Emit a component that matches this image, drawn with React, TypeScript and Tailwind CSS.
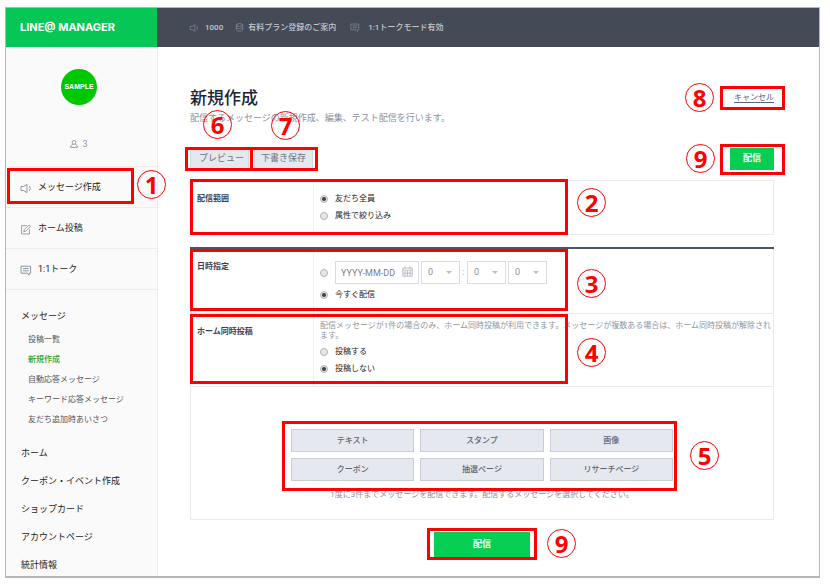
import React, { useState } from 'react';

const FONT = "font-['Roboto','Noto_Sans_CJK_JP',sans-serif]";

type IconProps = { className?: string };

const SpeakerIcon: React.FC<IconProps> = ({ className }) => (
    <svg viewBox="0 0 12 10" fill="none" stroke="currentColor" strokeWidth="1" className={className}>
        <path d="M1 3h2.6L7 .9v8.2L3.6 7H1z" strokeLinejoin="round" />
        <path d="M9.4 2.6q1.8 2.4 0 4.8" />
    </svg>
);

const CoinsIcon: React.FC<IconProps> = ({ className }) => (
    <svg viewBox="0 0 10 10" fill="none" stroke="currentColor" strokeWidth="1" className={className}>
        <ellipse cx="5" cy="2.2" rx="3.6" ry="1.5" />
        <path d="M1.4 2.4v4.8M8.6 2.4v4.8M1.4 4.6c0 1 1.6 1.6 3.6 1.6s3.6-.6 3.6-1.6M1.4 7.2c0 1 1.6 1.9 3.6 1.9s3.6-.9 3.6-1.9" />
    </svg>
);

const TalkIcon: React.FC<IconProps> = ({ className }) => (
    <svg viewBox="0 0 12 11" fill="none" stroke="currentColor" strokeWidth="1" className={className}>
        <path d="M1 1.2h9.6v7H9.2v1.9L7 8.2H1z" strokeLinejoin="round" />
        <path d="M3 3.6h5.6M3 5.8h5.6" />
    </svg>
);

const EditIcon: React.FC<IconProps> = ({ className }) => (
    <svg viewBox="0 0 12 12" fill="none" stroke="currentColor" strokeWidth="1" className={className}>
        <path d="M6.8 1.8H1.2v9h8.6V6" strokeLinejoin="round" />
        <path d="M3.6 8.4l.6-2.3L9.3 1l1.7 1.6-5.2 5.2z" strokeLinejoin="round" />
    </svg>
);

const PersonIcon: React.FC<IconProps> = ({ className }) => (
    <svg viewBox="0 0 8 8" fill="none" stroke="currentColor" strokeWidth=".9" className={className}>
        <circle cx="4" cy="2.4" r="1.9" />
        <path d="M2.8 4.3L.6 6v1.4h6.8V6L5.2 4.3" strokeLinejoin="round" />
    </svg>
);

const CalendarIcon: React.FC<IconProps> = ({ className }) => (
    <svg viewBox="0 0 11 11" fill="none" stroke="currentColor" strokeWidth="1" className={className}>
        <path d="M.8 2h9.4v8.2H.8zM.8 4.2h9.4M3 .4v2.2M8 .4v2.2" />
        <path d="M3 5v5M5.5 5v5M8 5v5M1 7.2h9" />
    </svg>
);

// Red frame drawn over the control it explains
const Frame: React.FC<{ className: string }> = ({ className }) => (
    <div className={`absolute border-3 border-[#ff0000] pointer-events-none ${className}`} />
);

const Badge: React.FC<{ n: number; className: string }> = ({ n, className }) => (
    <span
        className={`absolute flex items-center justify-center size-[29px] rounded-full border border-[#ff0000] text-[#ff0000] text-2xl leading-none font-bold font-[family-name:Open_Sans] pointer-events-none ${className}`}
    >
        {n}
    </span>
);

const Radio: React.FC<{ name: string; label: string; checked: boolean; onChange: () => void }> = ({ name, label, checked, onChange }) => (
    <label className="flex items-center gap-[7px] text-[8px] leading-3 text-[#222]">
        <input
            type="radio"
            name={name}
            checked={checked}
            onChange={onChange}
            className="appearance-none size-2 rounded-full border border-[#b5b5b5] bg-[#e6e6e6] checked:bg-[radial-gradient(circle,#444_1.5px,#e6e6e6_2.5px)]"
        />
        {label}
    </label>
);

const TimeSelect: React.FC<{ label: string; options: string[] }> = ({ label, options }) => (
    <span className="relative">
        <select
            aria-label={label}
            className="appearance-none block w-[39px] h-[23px] pl-1.5 border border-[#d9dce2] bg-white text-[9px] text-[#8b919d]"
        >
            {options.map(o => (
                <option key={o}>{o}</option>
            ))}
        </select>
        <svg viewBox="0 0 6 3" className="absolute right-2 top-[10px] w-1.5 h-[3px] pointer-events-none">
            <path d="M0 0h6L3 3z" fill="#b9bec8" />
        </svg>
    </span>
);

const Row: React.FC<{ title: string; className: string; children: React.ReactNode }> = ({ title, className, children }) => (
    <div className="relative flex border-x border-b border-[#e8eaed]">
        <div className="w-[123px] shrink-0 pl-1.5 pt-3 border-r border-[#eff0f2] text-[8px] leading-3 font-bold text-[#3a4254]">{title}</div>
        <div className={`flex-1 flex flex-col pl-1.5 ${className}`}>{children}</div>
    </div>
);

const quickLinks = [
    { label: 'メッセージ作成', icon: SpeakerIcon },
    { label: 'ホーム投稿', icon: EditIcon },
    { label: '1:1トーク', icon: TalkIcon },
];

const messageLinks = ['投稿一覧', '新規作成', '自動応答メッセージ', 'キーワード応答メッセージ', '友だち追加時あいさつ'];
const menuLinks = ['ホーム', 'クーポン・イベント作成', 'ショップカード', 'アカウントページ', '統計情報'];
const messageTypes = ['テキスト', 'スタンプ', '画像', 'クーポン', '抽選ページ', 'リサーチページ'];

const Sidebar: React.FC = () => (
    <aside className="w-[152px] shrink-0 bg-[#fafafa] border-r border-[#ececec]">
        <div className="flex flex-col items-center pt-[22px] pb-4 pr-[5px]">
            <div className="flex items-center justify-center size-9 rounded-full bg-[#00c800] text-white text-[7px] font-bold font-['Liberation_Sans',sans-serif]">
                SAMPLE
            </div>
            <div className="flex items-center gap-1 mt-[33px] text-[9px] leading-3 text-[#8f959f]">
                <PersonIcon className="size-2" />3
            </div>
        </div>
        <nav>
            {quickLinks.map(({ label, icon: Icon }, i) => (
                <a key={label} href="#" className="relative flex items-center gap-1.5 h-[41px] pl-[14px] pt-0.5 border-t border-[#ececec] text-[9px] text-[#222]">
                    <Icon className="w-3 h-[11px] text-[#8f959f]" />
                    {label}
                    {i === 0 && (
                        <>
                            <Frame className="left-px top-px w-[127px] h-9" />
                            <Badge n={1} className="left-[131px] top-[3px]" />
                        </>
                    )}
                </a>
            ))}
            <div className="pt-4 pb-px pl-[15px] border-t border-[#ececec] text-[9px] leading-5 text-[#222]">
                <div>メッセージ</div>
                <ul className="pt-1 pl-[7px] text-[8px] text-[#555]">
                    {messageLinks.map(label => (
                        <li key={label}>
                            <a href="#" className={label === '新規作成' ? 'text-[#21a637] font-medium' : ''}>{label}</a>
                        </li>
                    ))}
                </ul>
                <ul className="flex flex-col gap-2 pt-[13px]">
                    {menuLinks.map(label => (
                        <li key={label}><a href="#">{label}</a></li>
                    ))}
                </ul>
            </div>
        </nav>
    </aside>
);

const App: React.FC = () => {
    const [target, setTarget] = useState('all');
    const [timing, setTiming] = useState('now');
    const [homePost, setHomePost] = useState('no');

    return (
        <div className={`pl-[5px] pt-[7px] pr-[10px] pb-2 bg-white ${FONT}`}>
            <div className="border border-b-2 border-[#b5b5b5]">
                <header className="flex h-[39px] bg-[#444a56]">
                    <div className="w-[151px] shrink-0 flex items-center pl-[14px] bg-[#06c755] text-white text-[11px] font-bold font-['Inter',sans-serif]">
                        LINE@ MANAGER
                    </div>
                    <div className="flex items-center gap-3 pl-8 text-[8px] font-medium text-[#c3c6cc]">
                        <span className="flex items-center gap-1.5"><SpeakerIcon className="w-[10px] h-2 text-[#7d838e]" />1000</span>
                        <span className="flex items-center gap-1"><CoinsIcon className="size-[9px] text-[#7d838e]" />有料プラン登録のご案内</span>
                        <span className="flex items-center gap-2 pl-0.5"><TalkIcon className="w-[10px] h-[9px] text-[#7d838e]" />1:1トークモード有効</span>
                    </div>
                </header>

                <div className="flex">
                    <Sidebar />
                    <main className="flex-1 pl-8 pr-[45px] pt-[39px]">
                        <div className="flex items-start justify-between">
                            <div>
                                <h1 className="text-[17px] leading-6 font-medium text-[#1d2433]">新規作成</h1>
                                <p className="mt-0.5 text-[9px] leading-3 text-[#8b919d]">配信するメッセージの新規作成、編集、テスト配信を行います。</p>
                            </div>
                            <div className="relative">
                                <a href="#" className="block text-[8px] leading-6 text-[#5c6473] underline underline-offset-2">キャンセル</a>
                                <Frame className="-right-[11px] top-0 w-[65px] h-6" />
                                <Badge n={8} className="right-[60px] -top-[3px]" />
                            </div>
                        </div>

                        <div className="flex justify-between mt-6">
                            <div className="flex gap-[5px]">
                                <div className="relative">
                                    <button className="block w-[59px] h-[22px] pl-1 border border-[#d3d7de] bg-[#e5e8ef] text-[9px] text-[#6b7280]">プレビュー</button>
                                    <Frame className="-left-[5px] -top-px w-[68px] h-6" />
                                    <Badge n={6} className="left-[13px] -top-[38px]" />
                                </div>
                                <div className="relative">
                                    <button className="block w-[59px] h-[22px] border border-[#d3d7de] bg-[#e5e8ef] text-[9px] text-[#6b7280]">下書き保存</button>
                                    <Frame className="-left-1 -top-px w-[68px] h-6" />
                                    <Badge n={7} className="left-[17px] -top-[37px]" />
                                </div>
                            </div>
                            <div className="relative">
                                <button className="block w-11 h-[22px] bg-[#06ce52] text-[9px] font-bold text-white">配信</button>
                                <Frame className="-right-[11px] -top-1 w-[65px] h-[31px]" />
                                <Badge n={9} className="right-[59px] -top-1" />
                            </div>
                        </div>

                        <section className="relative mt-[10px] border-t border-[#e8eaed]">
                            <Row title="配信範囲" className="gap-[5px] pt-3 pb-3">
                                <Radio name="target" label="友だち全員" checked={target === 'all'} onChange={() => setTarget('all')} />
                                <Radio name="target" label="属性で絞り込み" checked={target === 'attr'} onChange={() => setTarget('attr')} />
                            </Row>
                            <Frame className="left-0 -top-0.5 w-[378px] h-14" />
                            <Badge n={2} className="left-[387px] top-[7px]" />
                        </section>

                        <section className="mt-3 border-t-2 border-[#4c5361]">
                            <div className="relative">
                                <Row title="日時指定" className="gap-[5px] pt-3 pb-3">
                                    <div className="flex items-center">
                                        <input
                                            type="radio"
                                            name="timing"
                                            aria-label="日時"
                                            checked={timing === 'date'}
                                            onChange={() => setTiming('date')}
                                            className="appearance-none size-2 rounded-full border border-[#b5b5b5] bg-[#e6e6e6] checked:bg-[radial-gradient(circle,#444_1.5px,#e6e6e6_2.5px)]"
                                        />
                                        <span className="relative ml-[7px] mr-0.5">
                                            <input
                                                type="text"
                                                aria-label="配信日"
                                                placeholder="YYYY-MM-DD"
                                                className="block w-[84px] h-[23px] pl-[5px] border border-[#d9dce2] text-[9px] placeholder:text-[#7a7f88]"
                                            />
                                            <CalendarIcon className="absolute right-1.5 top-[5px] size-[11px] text-[#b9bec8]" />
                                        </span>
                                        <TimeSelect label="時" options={['0', '1', '2', '3']} />
                                        <span className="w-[7px] text-center text-[9px] text-[#8b919d]">:</span>
                                        <TimeSelect label="分(十の位)" options={['0', '1', '2', '3', '4', '5']} />
                                        <span className="w-0.5" />
                                        <TimeSelect label="分(一の位)" options={['0', '5']} />
                                    </div>
                                    <Radio name="timing" label="今すぐ配信" checked={timing === 'now'} onChange={() => setTiming('now')} />
                                </Row>
                                <Frame className="left-0 top-0 w-[378px] h-[62px]" />
                                <Badge n={3} className="left-[387px] top-5" />
                            </div>
                            <div className="relative">
                                <Row title="ホーム同時投稿" className="gap-[5px] pt-[7px] pb-[11px]">
                                    <p className="text-[8px] leading-[10px] text-[#9096a3]">
                                        配信メッセージが1件の場合のみ、ホーム同時投稿が利用できます。メッセージが複数ある場合は、ホーム同時投稿が解除されます。
                                    </p>
                                    <Radio name="home" label="投稿する" checked={homePost === 'yes'} onChange={() => setHomePost('yes')} />
                                    <Radio name="home" label="投稿しない" checked={homePost === 'no'} onChange={() => setHomePost('no')} />
                                </Row>
                                <Frame className="left-0 top-0 w-[378px] h-[70px]" />
                                <Badge n={4} className="left-[387px] top-6" />
                            </div>
                            <div className="flex flex-col items-center pt-[42px] pb-[18px] border-x border-b border-[#e8eaed]">
                                <div className="relative grid grid-cols-3 gap-1.5 w-[382px]">
                                    {messageTypes.map(type => (
                                        <button key={type} className="h-[23px] border border-[#c9ced6] bg-[#e5e8ef] text-[8px] font-medium text-[#5f6672]">{type}</button>
                                    ))}
                                    <Frame className="-left-[9px] -top-2 w-[395px] h-[70px]" />
                                    <Badge n={5} className="left-[399px] top-3" />
                                </div>
                                <p className="mt-2 text-[8px] leading-3 text-[#8b919d]">1度に3件までメッセージを配信できます。配信するメッセージを選択してください。</p>
                            </div>
                        </section>

                        <div className="flex justify-center mt-3">
                            <div className="relative">
                                <button className="block w-24 h-[25px] bg-[#06ce52] text-[9px] font-bold text-white">配信</button>
                                <Frame className="-left-[7px] -top-1 w-[110px] h-8" />
                                <Badge n={9} className="left-[113px] -top-[3px]" />
                            </div>
                        </div>
                    </main>
                </div>
            </div>
        </div>
    );
};

export default App;
